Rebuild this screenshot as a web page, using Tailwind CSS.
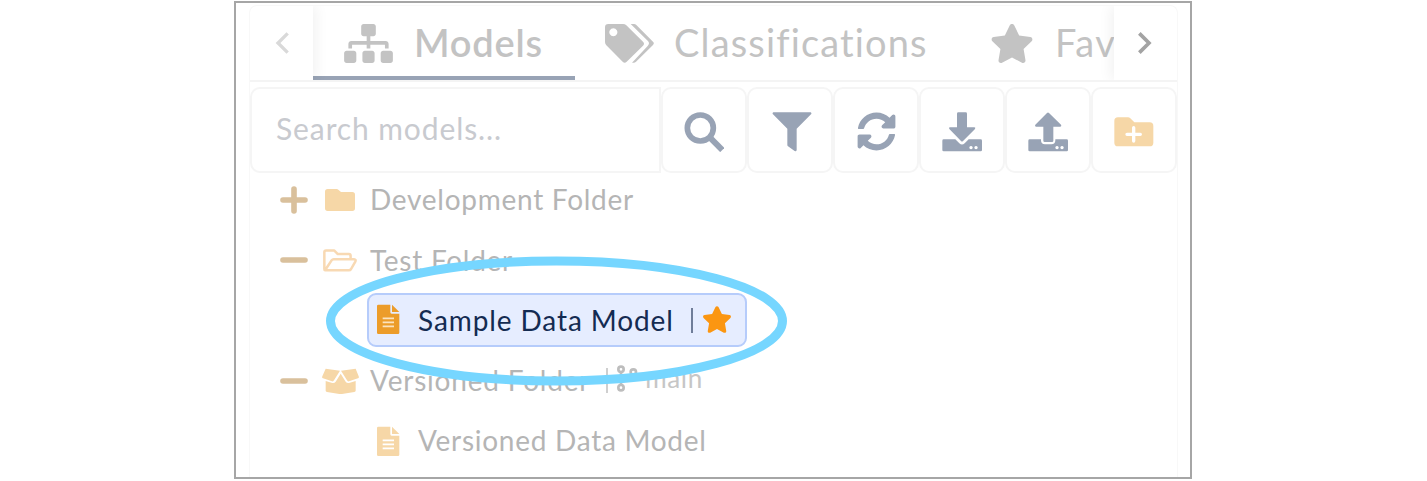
<!DOCTYPE html>
<html lang="en">
<head>
<meta charset="utf-8">
<title>Models</title>
<script src="https://cdn.jsdelivr.net/npm/@tailwindcss/browser@4"></script>
</head>
<body class="bg-white overflow-hidden font-['Lato','Open_Sans',sans-serif]">
<main class="relative ml-[234px] mt-px h-[478px] w-[958px] border-2 border-[#a6a6a6] overflow-hidden whitespace-nowrap">
  <section class="ml-[13px] mt-[2px] w-[929px] h-[474px] border-x border-t border-[#f8f8f8] rounded-t-lg">
    <nav class="flex h-[76px] border-b-2 border-[#f4f4f4]">
      <button class="w-[63px] shrink-0 flex items-center justify-center shadow-[4px_0_12px_rgba(0,0,0,0.05)] [clip-path:inset(0_-16px_0_0)]">
        <svg class="w-[14px] h-[22px] ml-[1px]" viewBox="0 0 42 66" fill="none" stroke="#d9d9d9" stroke-width="10"><path d="M38 4 9 33 38 62"/></svg>
      </button>
      <div class="flex flex-1 overflow-hidden">
        <div class="w-[262px] shrink-0 flex items-center pl-[31px] h-[75px] pt-[2px] border-b-[5px] border-[#98a3b5]">
          <svg class="w-[49px] h-[39px] mt-[3px]" viewBox="0 0 640 512" fill="#c3c3c3"><path d="M128 352H32c-17.67 0-32 14.33-32 32v96c0 17.67 14.33 32 32 32h96c17.67 0 32-14.33 32-32v-96c0-17.67-14.33-32-32-32zm-24-80h192v48h48v-48h192v48h48v-57.59c0-21.17-17.23-38.41-38.41-38.41H344v-64h40c17.67 0 32-14.33 32-32V32c0-17.67-14.33-32-32-32H256c-17.67 0-32 14.33-32 32v96c0 17.67 14.33 32 32 32h40v64H94.41C73.23 224 56 241.23 56 262.41V320h48v-48zm264 80h-96c-17.67 0-32 14.33-32 32v96c0 17.67 14.33 32 32 32h96c17.67 0 32-14.33 32-32v-96c0-17.67-14.33-32-32-32zm240 0h-96c-17.67 0-32 14.33-32 32v96c0 17.67 14.33 32 32 32h96c17.67 0 32-14.33 32-32v-96c0-17.67-14.33-32-32-32z"/></svg>
          <span class="ml-[21px] text-[38px] font-semibold tracking-[0.8px] text-[#c3c3c3]">Models</span>
        </div>
        <div class="w-[386px] shrink-0 flex items-center pl-[30px] h-[75px] pt-[2px] pb-[5px]">
          <svg class="w-[49px] h-[39px] mt-[3px]" viewBox="165 75 147 117" fill="#c3c3c3"><path fill-rule="evenodd" d="M175 75h44q6 0 10 4l50 49q6 6 0 12l-49 48q-6 6-12 0l-49-49q-4-4-4-10V85q0-10 10-10zm15 13a12 12 0 1 0 .1 0z"/><path d="M242 75h10q4 0 7 3l50 50q5 5 0 10l-51 50q-3 3-7 3h-5l47-50q8-8 0-16z"/></svg>
          <span class="ml-[20px] text-[38px] tracking-[1.15px] text-[#c3c3c3]">Classifications</span>
        </div>
        <div class="w-[153px] shrink-0 flex items-center pl-[29px] h-[75px] pt-[2px] pb-[5px]">
          <svg class="w-[44px] h-[39px] mt-[3px] shrink-0" viewBox="0 0 576 512" fill="#c3c3c3"><path d="M259.3 17.8L194 150.2 47.9 171.5c-26.2 3.8-36.7 36.1-17.7 54.6l105.7 103-25 145.5c-4.5 26.3 23.2 46 46.4 33.7L288 439.6l130.7 68.7c23.2 12.2 50.9-7.4 46.4-33.7l-25-145.5 105.7-103c19-18.5 8.5-50.8-17.7-54.6L382 150.2 316.7 17.8c-11.7-23.6-45.6-23.9-57.4 0z"/></svg>
          <span class="ml-[21px] text-[38px] tracking-[1.5px] text-[#c3c3c3]">Fav</span>
        </div>
      </div>
      <button class="w-[63px] shrink-0 flex items-center justify-center shadow-[-4px_0_12px_rgba(0,0,0,0.05)] [clip-path:inset(0_0_0_-16px)]">
        <svg class="w-[14px] h-[22px] mr-[1px]" viewBox="0 0 42 66" fill="none" stroke="#a3a3a3" stroke-width="11"><path d="M4 4 33 33 4 62"/></svg>
      </button>
    </nav>
    <div class="flex mt-[5px] h-[86px]">
      <div class="w-[411px] shrink-0 border-2 border-[#f5f5f5] rounded-l-[10px] flex items-center pl-[24px] pb-[3px] text-[30px] tracking-[0.9px] text-[#c8cacf]"><span>Search models...</span></div>
      <button class="w-[86px] shrink-0 border-2 border-[#f5f5f5] rounded-[10px] flex items-center justify-center"><svg class="w-[40px] h-[40px] mt-[3px]" viewBox="133 95 120 120" fill="none" stroke="#98a3b5"><circle cx="182" cy="143" r="39" stroke-width="17"/><path stroke-width="18" d="M211 172l37 37"/></svg></button>
      <button class="w-[86px] shrink-0 border-2 border-[#f5f5f5] rounded-[10px] flex items-center justify-center"><svg class="w-[40px] h-[40px] ml-[4px] mt-[3px]" viewBox="397 95 120 120" fill="#98a3b5"><path d="M401 96h112q4 3 1 6l-43 43v65q-2 4-6 2l-20-14q-2-2-2-5v-48l-43-43q-3-3 1-6z"/></svg></button>
      <button class="w-[86px] shrink-0 border-2 border-[#f5f5f5] rounded-[10px] flex items-center justify-center"><svg class="w-[39px] h-[39px] mt-[3px]" viewBox="0 0 512 512" fill="#98a3b5"><path d="M370.72 133.28C339.458 104.008 298.888 87.962 255.848 88c-77.458.068-144.328 53.178-162.791 126.85-1.344 5.363-6.122 9.15-11.651 9.15H24.103c-7.498 0-13.194-6.807-11.807-14.176C33.933 94.924 134.813 8 256 8c66.448 0 126.791 26.136 171.315 68.685L463.03 40.97C478.149 25.851 504 36.559 504 57.941V192c0 13.255-10.745 24-24 24H345.941c-21.382 0-32.09-25.851-16.971-40.971l41.75-41.749zM32 296h134.059c21.382 0 32.09 25.851 16.971 40.971l-41.75 41.75c31.262 29.273 71.835 45.319 114.876 45.28 77.418-.07 144.315-53.144 162.787-126.849 1.344-5.363 6.122-9.15 11.651-9.15h57.304c7.498 0 13.194 6.807 11.807 14.176C478.067 417.076 377.187 504 256 504c-66.448 0-126.791-26.136-171.315-68.685L48.97 471.03C33.851 486.149 8 475.441 8 454.059V320c0-13.255 10.745-24 24-24z"/></svg></button>
      <button class="w-[86px] shrink-0 border-2 border-[#f5f5f5] rounded-[10px] flex items-center justify-center"><svg class="w-[40px] h-[40px] mt-[3px]" viewBox="96 95 120 120" fill="#98a3b5"><path d="M145 96h22q4 0 4 4v41h22q5 1 2 5l-36 36q-3 3-6 0l-35-36q-3-4 2-5h21v-41q0-4 4-4z"/><path fill-rule="evenodd" d="M101 177h35l12 12q8 7 16 0l12-12h36q4 0 4 4v28q0 4-4 4H101q-4 0-4-4v-28q0-4 4-4zm82 20a5 5 0 1 0 .1 0zm15 0a5 5 0 1 0 .1 0z"/></svg></button>
      <button class="w-[86px] shrink-0 border-2 border-[#f5f5f5] rounded-[10px] flex items-center justify-center"><svg class="w-[40px] h-[40px] mt-[3px]" viewBox="354 95 120 120" fill="#98a3b5"><path d="M411 98q3-3 6 0l36 35q3 4-2 6h-21v42q0 4-4 4h-22q-4 0-4-4v-42h-22q-5-2-2-6z"/><path fill-rule="evenodd" d="M359 177h34v3q0 12 12 12h19q12 0 12-12v-3h34q4 0 4 4v28q0 4-4 4H359q-4 0-4-4v-28q0-4 4-4zm82 20a5 5 0 1 0 .1 0zm15 0a5 5 0 1 0 .1 0z"/></svg></button>
      <button class="w-[86px] shrink-0 border-2 border-[#f5f5f5] rounded-[10px] flex items-center justify-center"><svg class="w-[40px] h-[30px] mt-[3px]" viewBox="612 110 120 90"><path fill="#f6d7a7" d="M624 111h30q4 0 7 3l12 12h46q11 0 11 11v50q0 11-11 11h-95q-11 0-11-11v-65q0-11 11-11z"/><path d="M671 142v40M651 162h40" stroke="#fff" stroke-width="10" stroke-linecap="round"/></svg></button>
    </div>
    <ul class="pl-[30px] text-[28px] tracking-[0.73px] text-[#b5b5b5]">
      <li class="flex items-center h-[57px] pb-[4px]">
        <svg class="w-[28px] h-[28px]" viewBox="0 0 28 28" fill="none" stroke="#d9c09c" stroke-width="5.6" stroke-linecap="round"><path d="M3 14h22M14 3v22"/></svg>
        <svg class="w-[30px] h-[22px] ml-[17px]" viewBox="195 44 90 66" fill="#f6d7a7"><path d="M203 44h27q3 0 5 2l8 7h34q8 0 8 8v41q0 8-8 8h-74q-8 0-8-8V52q0-8 8-8z"/></svg>
        <span class="ml-[15px] pb-[2px]">Development Folder</span>
      </li>
      <li class="flex items-center h-[60px]">
        <svg class="w-[28px] h-[28px]" viewBox="0 0 28 28" fill="none" stroke="#d9c09c" stroke-width="5.6" stroke-linecap="round"><path d="M3 14h22"/></svg>
        <svg class="w-[34px] h-[23px] ml-[15px]" viewBox="190 221 101 68" fill="none" stroke="#f8d9b3" stroke-width="7.5" stroke-linejoin="round"><path d="M196 284q-2 0-2-4v-50q0-5 5-5h24l11 11h33q5 0 5 5v8M196 284h71q4 0 6-3l13-23q3-6-4-7h-60q-4 0-6 3z"/></svg>
        <span class="ml-[13px] pb-[1px]">Test Folder</span>
      </li>
      <li class="flex items-center h-[60px] pl-[87px]">
        <div class="flex items-center w-[380px] h-[54px] border-2 border-[#b6ccfb] bg-[#e6edff] rounded-[9px] pl-[8px] pb-[2px] text-[#142b52]">
          <svg class="w-[23px] h-[31px]" viewBox="173 161 69 91" fill="#ec9c2a"><path d="M177 162h36v23q0 4 4 4h23v57q0 4-4 4h-59q-4 0-4-4v-80q0-4 4-4z"/><path d="M218 162l22 22h-22z"/><path d="M190 203h34M190 215h34M190 227h34" stroke="#fbe3c0" stroke-width="5"/></svg>
          <span class="ml-[18px] pt-[2px] tracking-[0.9px]">Sample Data Model</span>
          <span class="ml-[17px] mt-[2px] w-[2px] h-[25px] bg-[#6f7d99]"></span>
          <svg class="w-[30px] h-[27px] ml-[9px]" viewBox="0 0 576 512" fill="#fb9611"><path d="M259.3 17.8L194 150.2 47.9 171.5c-26.2 3.8-36.7 36.1-17.7 54.6l105.7 103-25 145.5c-4.5 26.3 23.2 46 46.4 33.7L288 439.6l130.7 68.7c23.2 12.2 50.9-7.4 46.4-33.7l-25-145.5 105.7-103c19-18.5 8.5-50.8-17.7-54.6L382 150.2 316.7 17.8c-11.7-23.6-45.6-23.9-57.4 0z"/></svg>
        </div>
      </li>
      <li class="flex items-center h-[61px]">
        <svg class="w-[28px] h-[28px]" viewBox="0 0 28 28" fill="none" stroke="#d9c09c" stroke-width="5.6" stroke-linecap="round"><path d="M3 14h22"/></svg>
        <svg class="w-[37px] h-[26px] ml-[14px]" viewBox="275 54 111 78" fill="#f6d7a7"><path d="M286 56l43 6-18 29q-2 4-6 3l-27-9q-4-2-2-6zM376 56l-44 6 18 29q2 4 6 3l27-9q4-2 2-6z"/><path d="M286 93l20 6q7 1 10-4l15-24 15 24q3 5 10 4l20-6v29q0 3-4 4l-37 6h-8l-37-6q-4-1-4-4z"/></svg>
        <span class="ml-[11px] pb-[2px] tracking-[0.8px]">Versioned Folder</span>
        <span class="ml-[16px] w-[2px] h-[25px] bg-[#cfcfcf]"></span>
        <svg class="w-[22px] h-[27px] ml-[9px] mb-[5px]" viewBox="206 343 66 81" fill="none" stroke="#bdbdbd" stroke-width="8"><circle cx="218" cy="356" r="8"/><circle cx="218" cy="411" r="8"/><circle cx="255" cy="364" r="8"/><path d="M218 364v39M218 391q0-6 10-7 25-2 27-12"/></svg>
        <span class="ml-[6px] mb-[4px] text-[26px] tracking-[0.6px] text-[#c6c6c6]">main</span>
      </li>
      <li class="flex items-center h-[61px] pl-[97px]">
        <svg class="w-[23px] h-[31px]" viewBox="173 161 69 91" fill="#f6d7a7"><path d="M177 162h36v23q0 4 4 4h23v57q0 4-4 4h-59q-4 0-4-4v-80q0-4 4-4z"/><path d="M218 162l22 22h-22z"/><path d="M190 203h34M190 215h34M190 227h34" stroke="#fff" stroke-width="5"/></svg>
        <span class="ml-[18px] pb-[3px]">Versioned Data Model</span>
      </li>
    </ul>
  </section>
  <svg class="absolute left-[90px] top-[253px] w-[461px] h-[130px]" viewBox="0 0 461 130" fill="none" stroke="#76d6ff" stroke-width="9"><ellipse cx="230.5" cy="65" rx="226" ry="60"/></svg>
</main>
</body>
</html>
